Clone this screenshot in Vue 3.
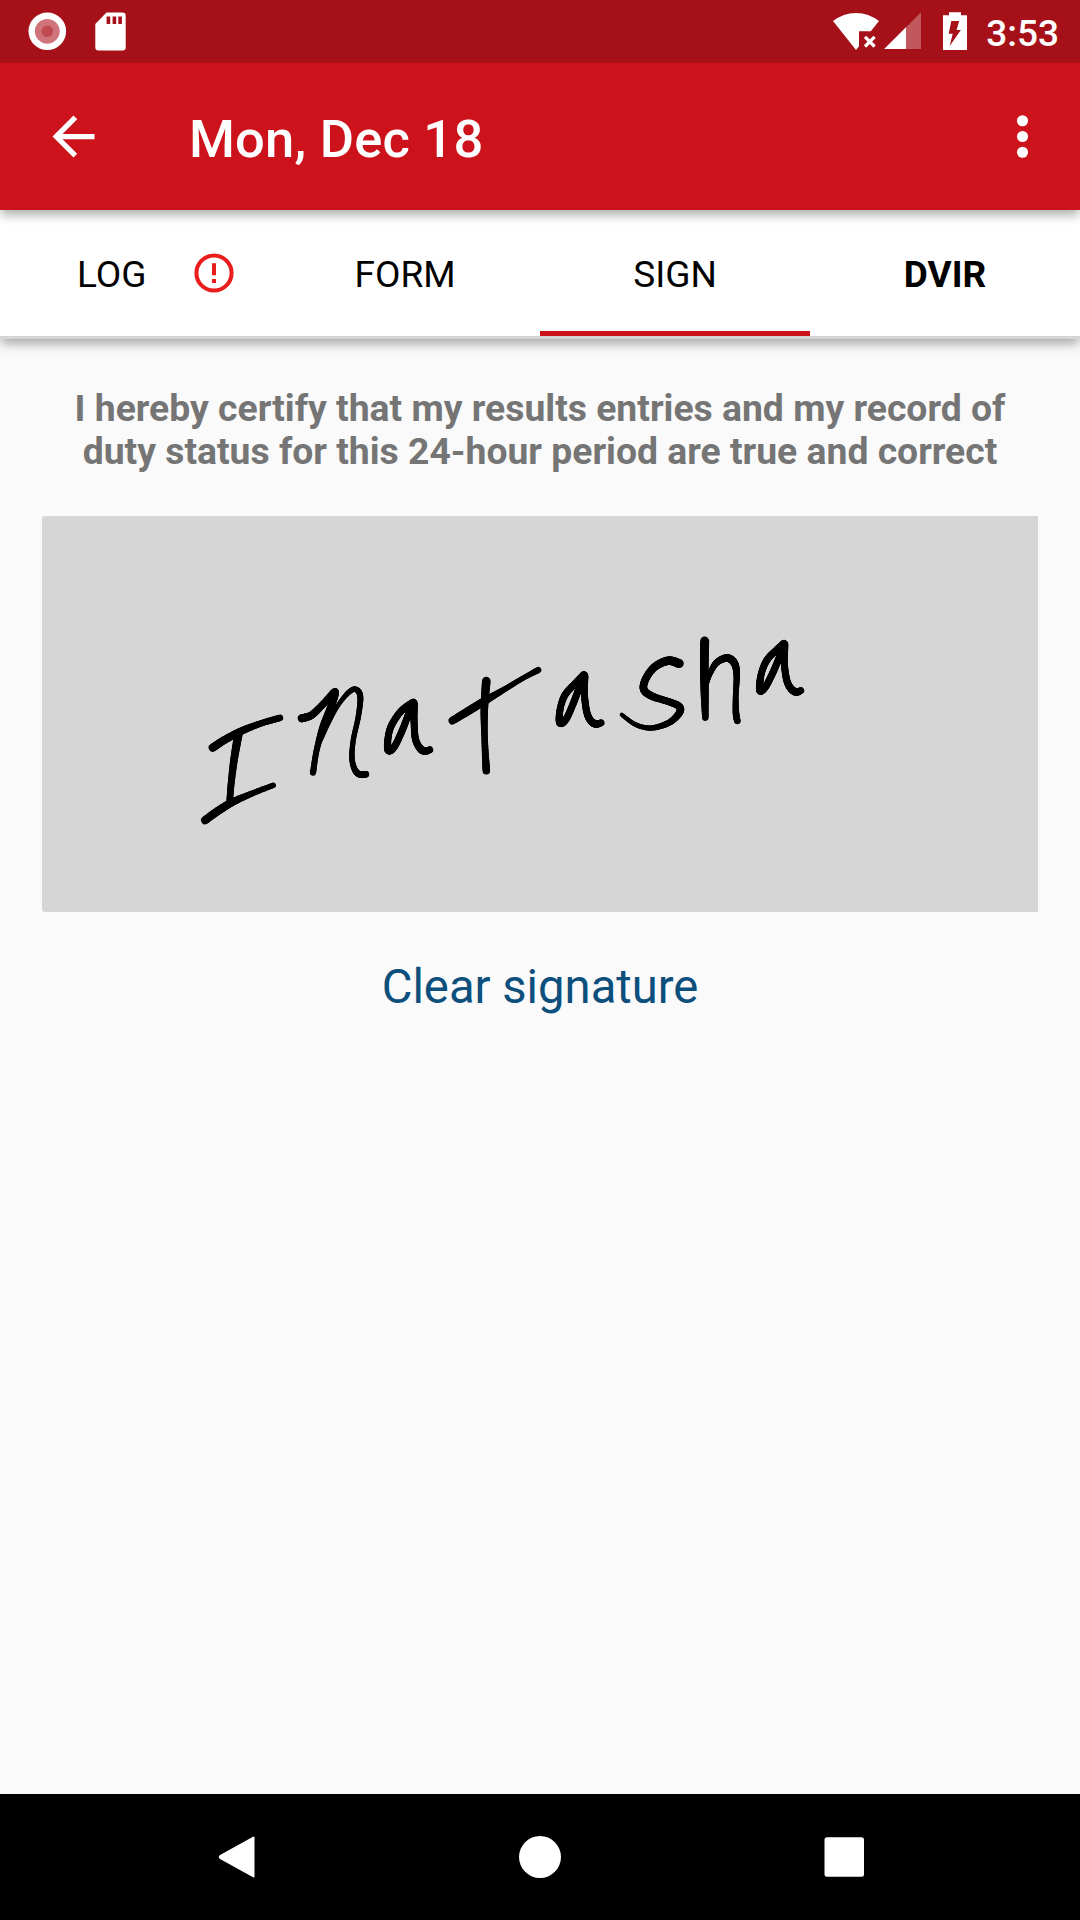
<script setup>
import { computed } from "vue";

const tabs = [
  { id: 1, name: "LOG", alert: true },
  { id: 2, name: "FORM" },
  { id: 3, name: "SIGN", active: true },
  { id: 4, name: "DVIR", bold: true },
];

// pen strokes, every point is [x, y, pen width]
const strokes = [
  [[212.7, 747.7, 7.5], [223.3, 740.7, 7.2], [240, 731.7, 7], [260, 723.7, 6], [280, 717.9, 6]],
  [[238.5, 733.5, 8], [234, 760, 7], [231, 785, 6.3], [229.7, 801.5, 6]],
  [[205, 820.3, 7.3], [218.3, 810.7, 7.5], [233.3, 801.7, 7], [253.3, 793, 5.5], [273.3, 785.2, 5]],
  [
    [301.7, 718.3, 7.5], [311.7, 715, 7], [323.3, 704, 6.5], [335, 691.7, 6.5], [331.7, 705, 7],
    [323.3, 726.7, 7], [316.7, 750, 5.5], [313, 772.7, 5.7],
  ],
  [
    [320, 740, 5], [328.5, 721.7, 5], [338.3, 705, 4], [348.3, 692.7, 4.7], [355.7, 689.3, 5],
    [360.3, 696.7, 5.5], [358.3, 716.7, 5], [353.3, 740, 4.8], [352, 758.3, 5], [355, 770, 5.5],
    [360, 774.5, 6], [366, 774.3, 6],
  ],
  [
    [413.3, 702.7, 7.5], [401.7, 710.5, 6.5], [391.7, 725, 6.5], [388, 738.3, 6.3], [388.3, 750, 7],
    [394, 747.3, 6.5], [401.7, 731.7, 6.5], [408.5, 714.3, 6.5], [413.3, 703.3, 7.5], [414, 720, 6.5],
    [415.3, 738.3, 6.5], [420, 748.3, 6.7], [425, 751, 7], [430, 749.7, 6],
  ],
  [[486.3, 681, 8], [484.3, 710, 7], [484.7, 740, 6], [486.3, 770.7, 7]],
  [[452.3, 720.7, 7], [470, 710, 7.5], [485, 700.7, 7.3], [503.3, 690, 5.5], [523.3, 678, 4.8], [538.3, 670, 5.7]],
  [
    [584, 675.3, 7.5], [576.7, 682, 6.5], [565, 695, 6.5], [560, 710, 6.3], [560, 722.7, 7],
    [566, 719.3, 6.5], [573.3, 703.3, 6.5], [579.5, 687, 6.5], [584, 675.6, 7.5], [584.3, 693.3, 6.5],
    [586.7, 711.7, 6.5], [590.7, 720.7, 6.7], [596, 724, 7], [601.3, 722.7, 6],
  ],
  [
    [679.3, 663.6, 8.3], [668.3, 660.7, 8], [655, 666.7, 7.3], [646, 678.3, 7], [643.7, 689.3, 7],
    [651.7, 696, 7], [666.7, 701, 6.5], [678.3, 705.7, 6.7], [680, 711.7, 6.7], [671.7, 721, 6],
    [660, 726.3, 5.3], [648.3, 728, 4.7], [635, 724.3, 4.3], [621.7, 714.7, 3.7],
  ],
  [[704.7, 641, 8.3], [704.3, 666.7, 8], [704.7, 693.3, 7.5], [705.3, 717.7, 6]],
  [
    [706, 685, 4.5], [710, 673.5, 5], [716.7, 662.6, 6], [727, 658, 7], [734.3, 663, 7],
    [736.7, 675, 6], [735.7, 696.7, 5.3], [736, 713.3, 6], [737.3, 721, 6],
  ],
  [
    [784, 644, 7.5], [776, 650.5, 6.5], [766.7, 660.5, 6.5], [761, 675, 6.3], [760, 690.3, 7],
    [765.7, 686.5, 6.5], [773.3, 671.7, 6.5], [780, 655.5, 6.5], [784, 644.3, 7.5], [784.3, 663.3, 6.5],
    [786.7, 680, 6.5], [790.7, 688.3, 6.7], [796, 692, 7], [801, 690.5, 6],
  ],
];

const steps = 10;

const spline = (a, b, c, d, t) =>
  0.5 * (2 * b + (c - a) * t + (2 * a - 5 * b + 4 * c - d) * t * t + (3 * b - a - 3 * c + d) * t * t * t);

// smooth every stroke and cut it into short lines so the width can vary
const segments = computed(() => {
  const lines = [];
  strokes.forEach((points) => {
    let last = points[0];
    for (let i = 0; i < points.length - 1; i++) {
      const p0 = points[i - 1] || points[i];
      const p1 = points[i];
      const p2 = points[i + 1];
      const p3 = points[i + 2] || p2;
      for (let s = 1; s <= steps; s++) {
        const next = [0, 1, 2].map((k) => spline(p0[k], p1[k], p2[k], p3[k], s / steps));
        lines.push({ x1: last[0], y1: last[1], x2: next[0], y2: next[1], width: next[2] * 1.08 });
        last = next;
      }
    }
  });
  return lines;
});
</script>

<template>
  <div class="screen">
    <div class="status-bar">
      <svg width="140" height="63" viewBox="0 0 140 63">
        <circle cx="47.3" cy="31.3" r="18.8" fill="#fff" />
        <circle cx="47.3" cy="31.3" r="12.4" fill="#cf747a" />
        <circle cx="47.3" cy="31.3" r="5.8" fill="#c04a52" />
        <path d="M106.5 12.5H122.5Q125.7 12.5 125.7 15.7V47.3Q125.7 50.5 122.5 50.5H98.5Q95.3 50.5 95.3 47.3V24Z" fill="#fff" />
        <path d="M106.6 16.5h3.6v7.5h-3.6zM112.6 16.5h3.6v7.5h-3.6zM118.3 16.5h3.6v7.5h-3.6z" fill="#a61119" />
      </svg>
      <div class="status-right">
        <svg width="150" height="63" viewBox="825 0 150 63">
          <path d="M833 21Q843.5 12.9 856 12.9T879 21L870.8 31.3H859V46.2L856 50Z" fill="#fff" />
          <path d="M865 36.9L874.6 46.5M874.6 36.9L865 46.5" stroke="#fff" stroke-width="3.2" />
          <path d="M884.2 49L921 12.2V49Z" fill="#fff" fill-opacity=".3" />
          <path d="M884.2 49L906 27.2V49Z" fill="#fff" />
          <path d="M949 12.2h12v3h6v34.8h-24V15.2h6z" fill="#fff" />
          <path d="M951.3 21h7.9l-2.6 9h4.3L949.7 46l3-12.3h-4z" fill="#a61119" />
        </svg>
        <span class="time">3:53</span>
      </div>
    </div>

    <div class="app-bar">
      <svg width="63" height="63" viewBox="0 0 24 24" fill="#fff">
        <path d="M20 11H7.83l5.59-5.59L12 4l-8 8 8 8 1.41-1.41L7.83 13H20v-2z" />
      </svg>
      <h1>Mon, Dec 18</h1>
      <svg width="63" height="63" viewBox="0 0 24 24" fill="#fff">
        <circle cx="12" cy="6" r="2.1" />
        <circle cx="12" cy="12" r="2.1" />
        <circle cx="12" cy="18" r="2.1" />
      </svg>
    </div>

    <div class="tabs">
      <div v-for="t in tabs" :key="t.id" class="tab" :class="{ active: t.active, bold: t.bold, alert: t.alert }">
        <span>{{ t.name }}</span>
        <svg v-if="t.alert" width="40" height="40" viewBox="0 0 40 40">
          <circle cx="20" cy="20" r="17.6" fill="none" stroke="#ea1c1c" stroke-width="4" />
          <path d="M18 10.2h4v12h-4zM18 26h4v4h-4z" fill="#ea1c1c" />
        </svg>
      </div>
    </div>

    <div class="content">
      <p class="certify">
        I hereby certify that my results entries and my record of<br />duty status for this 24-hour period are true and correct
      </p>
      <div class="pad">
        <svg width="996" height="396" viewBox="42 516 996 396" stroke="#000" stroke-linecap="round">
          <line
            v-for="(l, i) in segments"
            :key="i"
            :x1="l.x1"
            :y1="l.y1"
            :x2="l.x2"
            :y2="l.y2"
            :stroke-width="l.width"
          />
        </svg>
      </div>
      <button class="clear">Clear signature</button>
    </div>

    <div class="nav-bar">
      <svg width="42" height="42" viewBox="0 0 42 42">
        <path d="M38.5 1.500V40.500L6 22.500Q3.500 21 6 19.500Z" fill="#fff" stroke="#fff" stroke-width="2" stroke-linejoin="round" />
      </svg>
      <svg width="42" height="42" viewBox="0 0 42 42"><circle cx="21" cy="21" r="21" fill="#fff" /></svg>
      <svg width="42" height="42" viewBox="0 0 42 42"><rect x="1.500" y="1.200" width="39.500" height="39.500" rx="2.500" fill="#fff" /></svg>
    </div>
  </div>
</template>

<style>
body {
  margin: 0;
}
</style>

<style scoped>
.screen {
  width: 1080px;
  height: 1920px;
  display: flex;
  flex-direction: column;
  overflow: hidden;
  background-color: #fafafa;
  font-family: Roboto, sans-serif;
}
svg {
  display: block;
  flex: none;
}

.status-bar {
  height: 63px;
  display: flex;
  justify-content: space-between;
  background-color: #a61119;
  position: relative;
  z-index: 3;
}
.status-right {
  display: flex;
  padding-right: 21px;
  gap: 11px;
}
.time {
  color: #fff;
  font-size: 37px;
  font-weight: 500;
  line-height: 67px;
}

.app-bar {
  height: 147px;
  box-sizing: border-box;
  padding: 0 26px 0 42px;
  display: flex;
  align-items: center;
  background-color: #cc131c;
  position: relative;
  z-index: 2;
  box-shadow: 0 6px 10px -1px rgba(0, 0, 0, 0.32);
}
.app-bar h1 {
  flex: 1;
  margin: 4px 0 0 84px;
  color: #fff;
  font-size: 52.5px;
  font-weight: 500;
  line-height: 62px;
  letter-spacing: 0.2px;
}

.tabs {
  height: 129px;
  box-sizing: border-box;
  display: flex;
  background-color: #fff;
  border-bottom: 3px solid #d5d5d5;
  position: relative;
  z-index: 1;
  box-shadow: 0 6px 10px -1px rgba(0, 0, 0, 0.32);
}
.tab {
  width: 270px;
  box-sizing: border-box;
  padding-top: 8px;
  border-bottom: 5px solid transparent;
  display: flex;
  align-items: center;
  justify-content: center;
  color: #000;
  font-size: 37px;
  line-height: 44px;
}
.tab.alert {
  justify-content: flex-start;
  padding-left: 77px;
  gap: 48px;
}
.tab.alert svg {
  margin-top: -4px;
}
.tab.active {
  border-bottom-color: #cc131c;
}
.tab.bold {
  font-weight: 700;
}

.content {
  flex: 1;
  display: flex;
  flex-direction: column;
  align-items: center;
}
.certify {
  margin: 48px 0 0;
  color: #757575;
  font-size: 37.3px;
  font-weight: 700;
  line-height: 43px;
  text-align: center;
  white-space: nowrap;
}
.pad {
  margin-top: 43px;
  background-color: #d6d6d6;
  border-radius: 3px 0 0 3px;
}
.clear {
  margin-top: 47px;
  padding: 0;
  border: none;
  background: none;
  color: #0d4f7c;
  font-family: inherit;
  font-size: 47.2px;
  line-height: 56px;
}

.nav-bar {
  height: 126px;
  box-sizing: border-box;
  padding: 0 215px;
  display: flex;
  align-items: center;
  justify-content: space-between;
  background-color: #000;
}
</style>
